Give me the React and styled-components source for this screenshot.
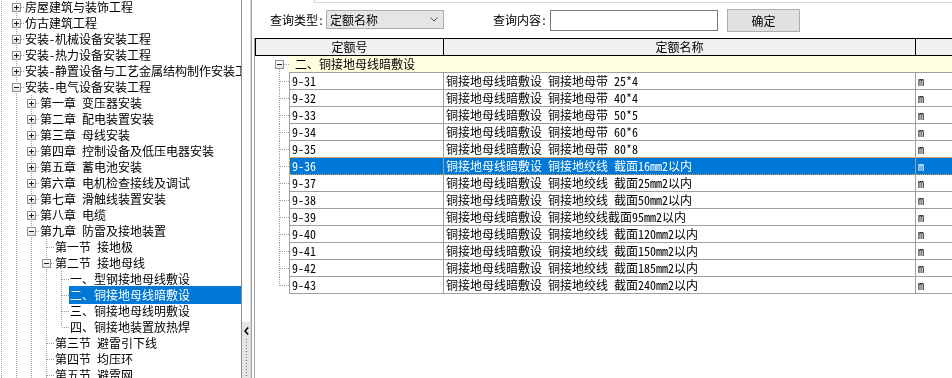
import React from 'react';
import styled, { createGlobalStyle, css } from 'styled-components';

const FONT = `"Noto Sans Mono CJK SC", "Noto Sans CJK SC", "Liberation Sans", sans-serif`;

const Global = createGlobalStyle`
  html, body { margin: 0; padding: 0; background: #fff; }
  body { font-family: ${FONT}; font-size: 12px; color: #000; }
  #root { width: 952px; height: 378px; overflow: hidden; }
`;

const DOT_V = 'repeating-linear-gradient(to bottom, #a0a0a0 0 1px, transparent 1px 2px)';
const DOT_H = 'repeating-linear-gradient(to right, #a0a0a0 0 1px, transparent 1px 2px)';

const Page = styled.div`
  display: flex;
  width: 952px;
  height: 378px;
  overflow: hidden;
  background: #fff;
  will-change: transform;
`;

/* ---------- left tree ---------- */
const TreePanel = styled.div`
  width: 241px;
  flex: none;
  border-right: 1px solid #8c8c8c;
  overflow: hidden;
`;
const TreeList = styled.div`
  margin-top: -1px;
`;
const TreeRow = styled.div`
  display: flex;
  height: 16px;
  margin-left: -6px;
  white-space: nowrap;
`;
const Guide = styled.span`
  position: relative;
  flex: none;
  width: 15px;
  height: 16px;
  display: flex;
  justify-content: center;
  align-items: flex-start;
  padding-top: 4px;
  box-sizing: border-box;
  &::before {
    content: '';
    position: absolute;
    left: 7px;
    top: 0;
    width: 1px;
    height: ${p => (p.$kind === 'elbow' ? '8px' : p.$kind === 'none' ? '0' : '16px')};
    background: ${DOT_V};
  }
  &::after {
    content: '';
    position: absolute;
    left: 8px;
    top: 8px;
    height: 1px;
    width: ${p => (p.$kind === 'tee' || p.$kind === 'elbow' ? '7px' : '0')};
    background: ${DOT_H};
  }
`;
const ExpBox = styled.span`
  position: relative;
  z-index: 1;
  width: 9px;
  height: 9px;
  box-sizing: border-box;
  border: 1px solid #919191;
  background: linear-gradient(#ffffff, #e4e4e4);
  display: flex;
  svg { display: block; }
`;
const TreeLabel = styled.span`
  flex: 1;
  height: 16px;
  line-height: 16px;
  padding-left: 1px;
  ${p =>
    p.$sel &&
    css`
      background: #0078d7;
      color: #fff;
      box-shadow: 0 1px 0 #0078d7, 0 -1px 0 #0078d7;
    `}
`;

function Sign({ plus, color = '#1e1e1e' }) {
  return (
    <svg width="7" height="7" viewBox="0 0 7 7" shapeRendering="crispEdges">
      <rect x="1" y="3" width="5" height="1" fill={color} />
      {plus && <rect x="3" y="1" width="1" height="5" fill={color} />}
    </svg>
  );
}

const treeData = [
  [0, '房屋建筑与装饰工程', 'plus'],
  [0, '仿古建筑工程', 'plus'],
  [0, '安装-机械设备安装工程', 'plus'],
  [0, '安装-热力设备安装工程', 'plus'],
  [0, '安装-静置设备与工艺金属结构制作安装工程', 'plus'],
  [0, '安装-电气设备安装工程', 'minus'],
  [1, '第一章 变压器安装', 'plus'],
  [1, '第二章 配电装置安装', 'plus'],
  [1, '第三章 母线安装', 'plus'],
  [1, '第四章 控制设备及低压电器安装', 'plus'],
  [1, '第五章 蓄电池安装', 'plus'],
  [1, '第六章 电机检查接线及调试', 'plus'],
  [1, '第七章 滑触线装置安装', 'plus'],
  [1, '第八章 电缆', 'plus'],
  [1, '第九章 防雷及接地装置', 'minus'],
  [2, '第一节 接地极', 'leaf'],
  [2, '第二节 接地母线', 'minus'],
  [3, '一、型钢接地母线敷设', 'leaf'],
  [3, '二、铜接地母线暗敷设', 'leaf', true],
  [3, '三、铜接地母线明敷设', 'leaf'],
  [3, '四、铜接地装置放热焊', 'leaf', false, true],
  [2, '第三节 避雷引下线', 'leaf'],
  [2, '第四节 均压环', 'leaf'],
  [2, '第五节 避雷网', 'leaf'],
];

function TreeItem({ level, text, kind, sel, last }) {
  const pipes = [];
  for (let i = 0; i <= level; i++) pipes.push(<Guide key={i} $kind="pipe" />);
  return (
    <TreeRow>
      {pipes}
      <Guide $kind={last ? 'elbow' : 'tee'}>
        {kind !== 'leaf' && (
          <ExpBox>
            <Sign plus={kind === 'plus'} />
          </ExpBox>
        )}
      </Guide>
      <TreeLabel $sel={sel}>{text}</TreeLabel>
    </TreeRow>
  );
}

/* ---------- splitter ---------- */
const Splitter = styled.div`
  width: 8px;
  flex: none;
  border-right: 1px solid #d9d9d9;
  display: flex;
  flex-direction: column;
  justify-content: flex-end;
`;
const CollapseBtn = styled.div`
  height: 56px;
  background: #e6e6e6;
  display: flex;
  flex-direction: column;
  align-items: center;
  padding-top: 5px;
  box-sizing: border-box;
  gap: 4px;
`;
const DotLine = styled.div`
  flex: 1;
  width: 1px;
  background: repeating-linear-gradient(to bottom, #3b78c4 0 1px, transparent 1px 3px);
`;

/* ---------- right panel ---------- */
const RightPanel = styled.div`
  flex: 1;
  min-width: 0;
  border-left: 1px solid #a0a0a0;
  display: flex;
  flex-direction: column;
  overflow: hidden;
`;
const TabStrip = styled.div`
  display: flex;
  height: 3px;
  flex: none;
`;
const TabStub = styled.div`
  width: 62px;
  border-right: 1px solid #d0d0d0;
`;
const TabRest = styled.div`
  flex: 1;
  border-bottom: 1px solid #dadada;
`;
const QueryBar = styled.div`
  display: flex;
  align-items: flex-start;
  height: 23px;
  margin-top: 6px;
  padding-left: 18px;
  flex: none;
`;
const QLabel = styled.span`
  margin-top: 1px;
  line-height: 19px;
  margin-left: ${p => p.$ml || 0}px;
  margin-right: ${p => p.$mr || 2}px;
  white-space: nowrap;
`;
const SelectBox = styled.div`
  margin-top: 1px;
  width: 118px;
  height: 19px;
  box-sizing: border-box;
  border: 1px solid #acacac;
  background: #e5e5e5;
  display: flex;
  align-items: center;
  justify-content: space-between;
  padding: 0 5px 0 3px;
  line-height: 17px;
`;
const TextInput = styled.div`
  margin-top: 1px;
  width: 168px;
  height: 21px;
  box-sizing: border-box;
  border: 1px solid #7a7a7a;
  background: #fff;
`;
const Button = styled.div`
  margin-left: 9px;
  width: 73px;
  height: 23px;
  box-sizing: border-box;
  border: 1px solid #adadad;
  background: #e1e1e1;
  display: flex;
  align-items: center;
  justify-content: center;
`;

const GridFrame = styled.div`
  flex: 1;
  margin-top: 6px;
  margin-left: 2px;
  border-left: 1px solid #a0a0a0;
  overflow: hidden;
`;
const HeaderRow = styled.div`
  display: flex;
  height: 18px;
  box-sizing: border-box;
  border-top: 1px solid #000;
  border-bottom: 1px solid #000;
  border-left: 1px solid #000;
  background: #f0f0f0;
  width: 900px;
`;
const HCell = styled.div`
  flex: none;
  width: ${p => p.$w}px;
  ${p => p.$div && css`border-left: 1px solid #000;`}
  text-align: center;
  line-height: 16px;
  white-space: nowrap;
`;
const GridRow = styled.div`
  display: flex;
  height: 17px;
  width: 900px;
`;
const TGuide = styled.div`
  position: relative;
  flex: none;
  width: 34px;
  height: 17px;
  &::before {
    content: '';
    position: absolute;
    left: 24px;
    top: ${p => (p.$kind === 'group' ? '13px' : '0')};
    width: 1px;
    height: ${p => (p.$kind === 'elbow' ? '9px' : p.$kind === 'group' ? '4px' : '17px')};
    background: ${DOT_V};
  }
  &::after {
    content: '';
    position: absolute;
    left: ${p => (p.$kind === 'group' ? '29px' : '25px')};
    top: 8px;
    height: 1px;
    width: ${p => (p.$kind === 'group' ? '5px' : '9px')};
    background: ${DOT_H};
  }
`;
const GroupBox = styled(ExpBox)`
  position: absolute;
  left: 20px;
  top: 4px;
`;
const GroupCell = styled.div`
  flex: 1;
  height: 16px;
  line-height: 16px;
  border-bottom: 1px solid #a0a0a0;
  background: #ffffe0;
  padding-left: 6px;
  white-space: nowrap;
`;
const Cells = styled.div`
  position: relative;
  display: flex;
  flex: 1;
  ${p =>
    p.$sel &&
    css`
      background: #0078d7;
      color: #fff;
      &::after {
        content: '';
        position: absolute;
        left: 0;
        right: 0;
        top: -1px;
        bottom: 0;
        border: 1px dotted #f2a04a;
        pointer-events: none;
      }
    `}
`;
const Cell = styled.div`
  flex: none;
  width: ${p => p.$w}px;
  height: 16px;
  line-height: 16px;
  border-left: 1px solid #a0a0a0;
  border-bottom: 1px solid ${p => (p.$sel ? '#0078d7' : '#a0a0a0')};
  padding-left: 2px;
  box-sizing: content-box;
  white-space: nowrap;
  overflow: hidden;
`;

const rows = [
  ['9-31', '铜接地母线暗敷设 铜接地母带 25*4'],
  ['9-32', '铜接地母线暗敷设 铜接地母带 40*4'],
  ['9-33', '铜接地母线暗敷设 铜接地母带 50*5'],
  ['9-34', '铜接地母线暗敷设 铜接地母带 60*6'],
  ['9-35', '铜接地母线暗敷设 铜接地母带 80*8'],
  ['9-36', '铜接地母线暗敷设 铜接地绞线 截面16mm2以内', true],
  ['9-37', '铜接地母线暗敷设 铜接地绞线 截面25mm2以内'],
  ['9-38', '铜接地母线暗敷设 铜接地绞线 截面50mm2以内'],
  ['9-39', '铜接地母线暗敷设 铜接地绞线截面95mm2以内'],
  ['9-40', '铜接地母线暗敷设 铜接地绞线 截面120mm2以内'],
  ['9-41', '铜接地母线暗敷设 铜接地绞线 截面150mm2以内'],
  ['9-42', '铜接地母线暗敷设 铜接地绞线 截面185mm2以内'],
  ['9-43', '铜接地母线暗敷设 铜接地绞线 截面240mm2以内'],
];

export default function App() {
  return (
    <>
      <Global />
      <Page>
        <TreePanel>
          <TreeList>
            {treeData.map(([level, text, kind, sel, last], i) => (
              <TreeItem key={i} level={level} text={text} kind={kind} sel={sel} last={last} />
            ))}
          </TreeList>
        </TreePanel>
        <Splitter>
          <CollapseBtn>
            <svg width="5" height="8" viewBox="0 0 5 8">
              <path d="M4.2 0.5 L1 4 L4.2 7.5" stroke="#000" strokeWidth="1.6" fill="none" />
            </svg>
            <DotLine />
          </CollapseBtn>
        </Splitter>
        <RightPanel>
          <TabStrip>
            <TabStub />
            <TabRest />
          </TabStrip>
          <QueryBar>
            <QLabel>查询类型:</QLabel>
            <SelectBox>
              <span>定额名称</span>
              <svg width="8" height="5" viewBox="0 0 8 5">
                <path d="M0.5 0.5 L4 4 L7.5 0.5" stroke="#555" strokeWidth="1" fill="none" />
              </svg>
            </SelectBox>
            <QLabel $ml={49} $mr={3}>查询内容:</QLabel>
            <TextInput />
            <Button>确定</Button>
          </QueryBar>
          <GridFrame>
            <HeaderRow>
              <HCell $w={187}>定额号</HCell>
              <HCell $w={471} $div>定额名称</HCell>
              <HCell $w={200} $div />
            </HeaderRow>
            <GridRow>
              <TGuide $kind="group">
                <GroupBox>
                  <Sign plus={false} />
                </GroupBox>
              </TGuide>
              <GroupCell>二、铜接地母线暗敷设</GroupCell>
            </GridRow>
            {rows.map(([code, name, sel], i) => (
              <GridRow key={code}>
                <TGuide $kind={i === rows.length - 1 ? 'elbow' : 'tee'} />
                <Cells $sel={sel}>
                  <Cell $w={151} $sel={sel}>{code}</Cell>
                  <Cell $w={469} $sel={sel}>{name}</Cell>
                  <Cell $w={200} $sel={sel}>m</Cell>
                </Cells>
              </GridRow>
            ))}
          </GridFrame>
        </RightPanel>
      </Page>
    </>
  );
}
